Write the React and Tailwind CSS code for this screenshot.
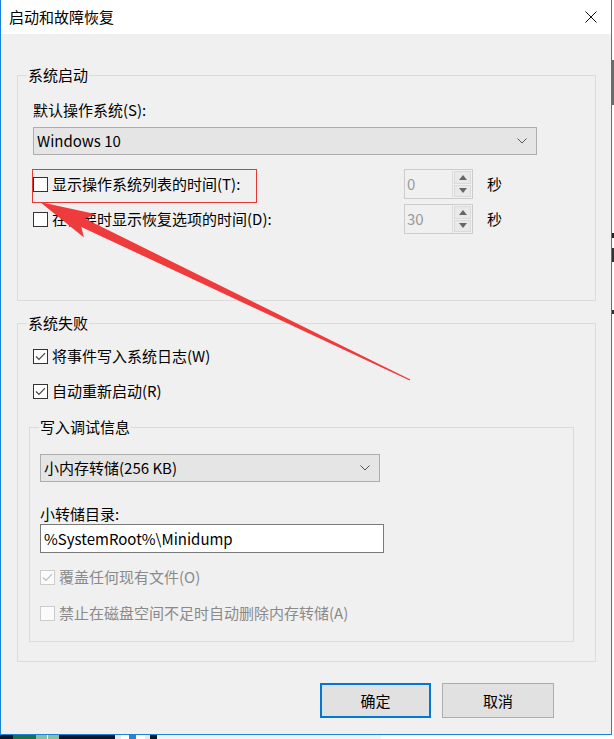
import React from "react";

function Check({ checked, disabled, label }) {
  return (
    <div className="flex h-[20px] items-center">
      <span
        className={
          disabled
            ? "flex h-[15px] w-[15px] items-center justify-center border border-[#cccccc] bg-[#fbfbfb]"
            : "flex h-[15px] w-[15px] items-center justify-center border border-[#333333] bg-white"
        }
      >
        {checked && (
          <svg width="11" height="9" viewBox="0 0 11 9">
            <path
              d="M1 4.5 L4 7.5 L10 1.2"
              fill="none"
              stroke={disabled ? "#bdbdbd" : "#444444"}
              strokeWidth="1.2"
            />
          </svg>
        )}
      </span>
      <span className={disabled ? "ml-[4px] text-[#8a8a8a]" : "ml-[4px] text-black"}>{label}</span>
    </div>
  );
}

function Chevron() {
  return (
    <svg width="10" height="6" viewBox="0 0 10 6">
      <path d="M0.5 0.5 L5 5 L9.5 0.5" fill="none" stroke="#555" strokeWidth="1" />
    </svg>
  );
}

function Select({ value, className }) {
  return (
    <div
      className={`flex h-[28px] items-center justify-between border border-[#adadad] bg-[#e5e5e5] pl-[3px] pr-[9px] ${className}`}
    >
      <span>{value}</span>
      <Chevron />
    </div>
  );
}

function Spin({ value }) {
  return (
    <div className="flex h-[30px] w-[69px] border border-[#cccccc]">
      <div className="flex-1 pl-[2px] leading-[27px] text-[#9a9a9a]">{value}</div>
      <div className="flex w-[20px] flex-col gap-px border-l border-[#dcdcdc] p-px">
        <div className="flex flex-1 items-center justify-center border border-[#dadada] bg-[#e9e9e9]">
          <svg width="8" height="5" viewBox="0 0 8 5">
            <path d="M0 5 L4 0 L8 5 Z" fill="#666" />
          </svg>
        </div>
        <div className="flex flex-1 items-center justify-center border border-[#dadada] bg-[#e9e9e9]">
          <svg width="8" height="5" viewBox="0 0 8 5">
            <path d="M0 0 L8 0 L4 5 Z" fill="#666" />
          </svg>
        </div>
      </div>
    </div>
  );
}

function TimeRow({ label, value, className }) {
  return (
    <div className={`flex h-[30px] items-center ${className}`}>
      <div className="w-[371px]">
        <Check label={label} />
      </div>
      <Spin value={value} />
      <span className="ml-[14px]">秒</span>
    </div>
  );
}

function Legend({ children }) {
  return (
    <span className="absolute left-[9px] top-[-11px] bg-[#f0f0f0] px-px leading-[20px]">{children}</span>
  );
}

export default function App() {
  return (
    <div className="relative flex h-[739px] w-[614px] flex-col overflow-hidden bg-white font-['Noto_Sans_CJK_SC',sans-serif] text-[15px] leading-[20px] text-black">
      <div className="flex h-[735px]">
        {/* dialog window */}
        <div className="flex h-[735px] w-[612px] flex-col border-x border-b border-[#1883d7]">
          <div className="flex h-[34px] items-center justify-between bg-white pl-[8px] pr-[14px]">
            <span>启动和故障恢复</span>
            <svg width="12" height="12" viewBox="0 0 12 12">
              <path d="M0.5 0.5 L11.5 11.5 M11.5 0.5 L0.5 11.5" stroke="#111" strokeWidth="1" />
            </svg>
          </div>

          <div className="flex flex-1 flex-col bg-[#f0f0f0] pl-[16px] pt-[41px]">
            {/* 系统启动 */}
            <div className="relative h-[226px] w-[579px] border border-[#dcdcdc] pl-[15px] pt-[24px]">
              <Legend>系统启动</Legend>
              <div>默认操作系统(S):</div>
              <Select value="Windows 10" className="mt-[7px] w-[504px]" />
              <TimeRow label="显示操作系统列表的时间(T):" value="0" className="mt-[14px]" />
              <TimeRow label="在需要时显示恢复选项的时间(D):" value="30" className="mt-[5px]" />
            </div>

            {/* 系统失败 */}
            <div className="relative mt-[22px] h-[339px] w-[579px] border border-[#dcdcdc] pl-[15px] pt-[22px]">
              <Legend>系统失败</Legend>
              <Check checked label="将事件写入系统日志(W)" />
              <div className="mt-[15px]">
                <Check checked label="自动重新启动(R)" />
              </div>

              <div className="relative -ml-[4px] mt-[26px] h-[215px] w-[545px] border border-[#dcdcdc] pl-[10px] pt-[26px]">
                <Legend>写入调试信息</Legend>
                <Select value="小内存转储(256 KB)" className="w-[340px]" />
                <div className="mt-[22px]">小转储目录:</div>
                <div className="flex h-[29px] w-[344px] items-center border border-[#7a7a7a] bg-white pl-[3px]">
                  %SystemRoot%\Minidump
                </div>
                <div className="mt-[14px]">
                  <Check checked disabled label="覆盖任何现有文件(O)" />
                </div>
                <div className="mt-[16px]">
                  <Check disabled label="禁止在磁盘空间不足时自动删除内存转储(A)" />
                </div>
              </div>
            </div>

            <div className="mt-[21px] flex justify-end gap-[11px] pr-[57px]">
              <button className="h-[35px] w-[111px] border-2 border-[#0078d7] bg-[#e1e1e1]">确定</button>
              <button className="h-[35px] w-[112px] border border-[#adadad] bg-[#e1e1e1]">取消</button>
            </div>
          </div>
        </div>

        {/* desktop edge */}
        <div className="flex w-[2px] flex-col">
          <div className="mt-[60px] h-[45px] bg-[#6b6b6b]" />
          <div className="mt-[128px] h-[5px] bg-[#222]" />
          <div className="mt-[10px] h-[14px] bg-[#333]" />
          <div className="mt-[48px] h-[4px] bg-[#333]" />
        </div>
      </div>

      {/* taskbar strip */}
      <div className="flex h-[4px]">
        <div className="w-[13px] bg-[#0b1626]" />
        <div className="w-[23px] bg-[#1e7145]" />
        <div className="w-[11px] bg-[#88c09d]" />
        <div className="w-[1px] bg-white" />
        <div className="w-[11px] bg-[#88c09d]" />
        <div className="w-[56px] bg-[#0b1626]" />
        <div className="w-[6px] bg-[#e9e9e9]" />
        <div className="w-[8px] bg-white" />
        <div className="w-[7px] bg-[#2f7fd0]" />
        <div className="w-[9px] bg-white" />
        <div className="w-[5px] bg-[#e9e9e9]" />
        <div className="w-[7px] bg-[#0b1626]" />
        <div className="w-[224px] bg-[#f3f3f3]" />
        <div className="flex-1 bg-white" />
      </div>

      {/* annotation */}
      <svg className="pointer-events-none absolute left-0 top-0" width="614" height="739" viewBox="0 0 614 739">
        <rect x="32.5" y="169.5" width="224" height="33" fill="none" stroke="#e53935" strokeWidth="1" />
        <polygon
          points="40,202 95.2,214.1 85.2,218.8 410.3,379.4 409.7,380.6 81.3,226.9 84,237.5"
          fill="#ef3b3b"
        />
      </svg>
    </div>
  );
}
